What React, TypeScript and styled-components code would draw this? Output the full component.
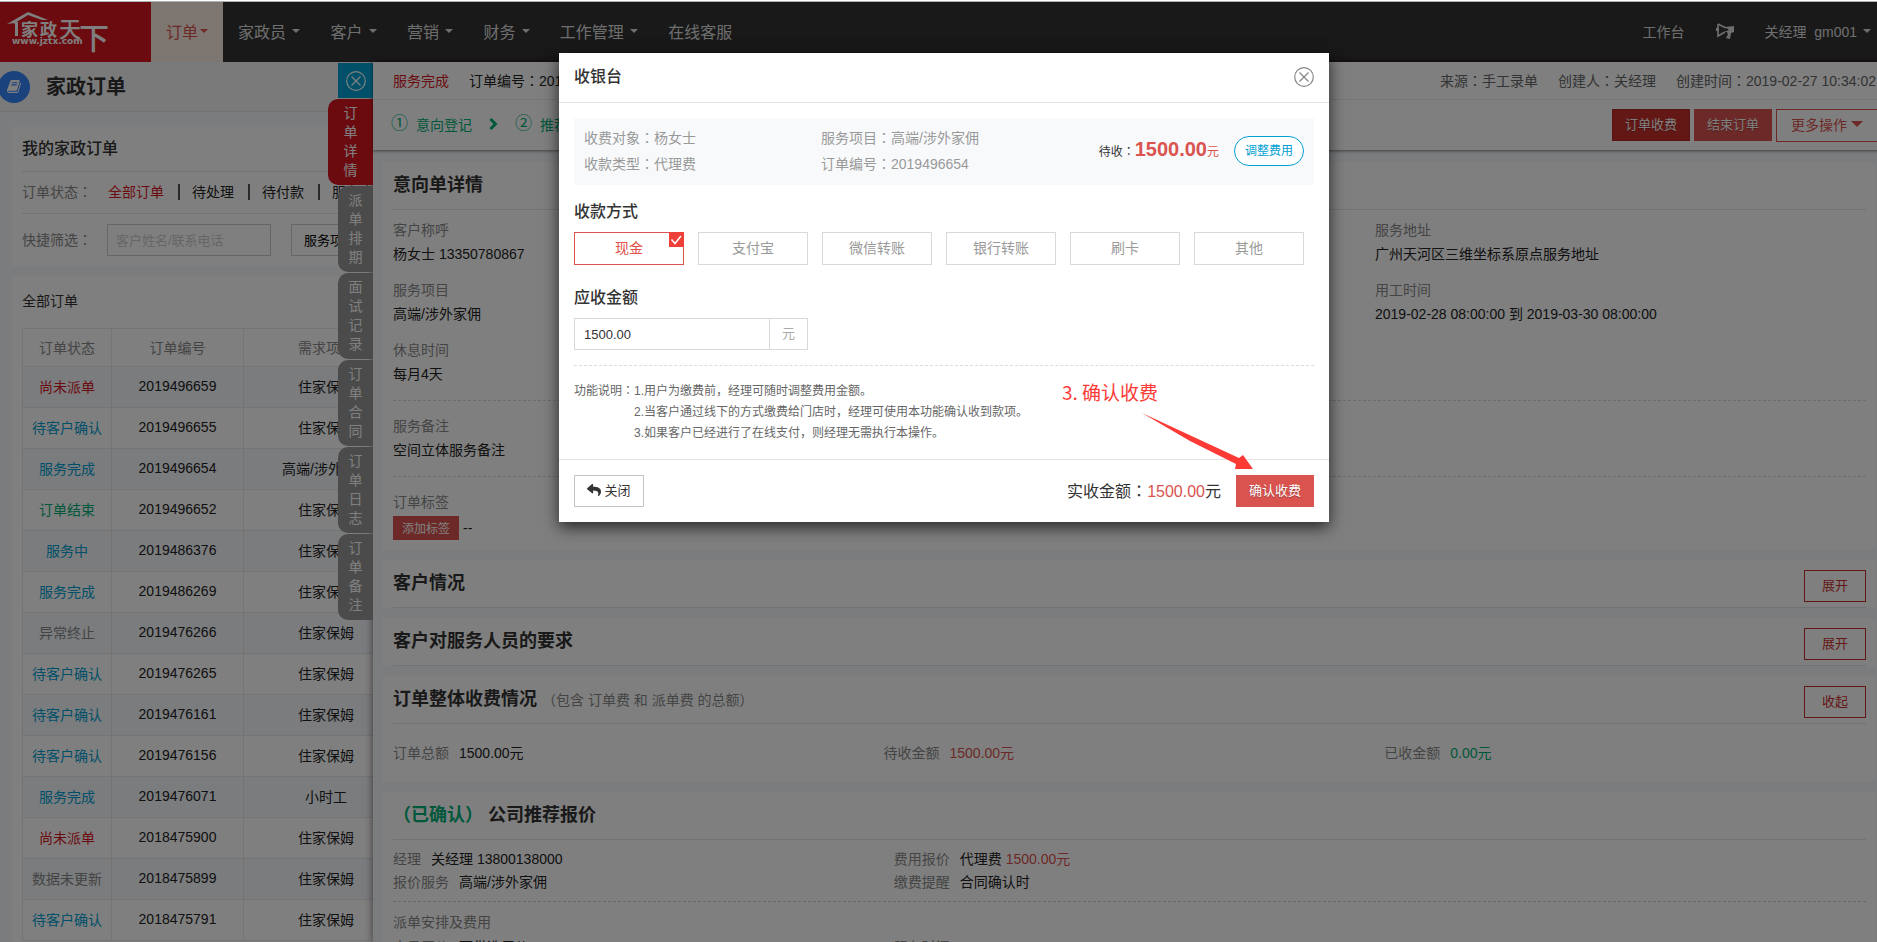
import React from "react";
import styled, { createGlobalStyle } from "styled-components";
import { FaReply } from "react-icons/fa";

const RED = "#d8161f";
const DANGER = "#d9534f";
const BLUE = "#00a0d2";
const GREEN = "#00b078";
const TINT = "#f5f8fd";
const LINE = "#e5e5e5";

const GlobalStyle = createGlobalStyle`
  *, *::before, *::after { box-sizing: border-box; }
  html, body, #root { height: 100%; }
  body {
    margin: 0;
    overflow: hidden;
    font-family: "Liberation Sans", Arial, "Noto Sans CJK SC", sans-serif;
    font-size: 14px;
    color: #333;
    background: #fff;
  }
  button, input, select { font-family: inherit; margin: 0; }
  button { cursor: pointer; white-space: nowrap; }
  a { color: inherit; text-decoration: none; }
  h1, h2, h3, p, ol, dl, dd { margin: 0; padding: 0; }
`;

/* Full-width colon set in the middle of its cell */
const ColonGlyph = styled.span`
  font-family: "Noto Sans CJK TC", sans-serif;
  line-height: 1;
`;
const Colon = () => <ColonGlyph lang="zh-Hant">：</ColonGlyph>;

const Frame = styled.div`
  display: flex;
  flex-direction: column;
  height: 100vh;
  overflow: hidden;
`;

const TopEdge = styled.div`
  flex: none;
  height: 2px;
  background: #fff;
  border-bottom: 1px solid #adb3b3;
`;

const Page = styled.div`
  position: relative;
  flex: 1;
  min-height: 0;
  width: calc(100% + 9px);
  display: flex;
  flex-direction: column;
  background: ${TINT};
`;

/* ---------- top navigation ---------- */

const NavBar = styled.header`
  flex: none;
  display: flex;
  height: 60px;
  background: #333;
  color: #ddd;
`;

const Brand = styled.a`
  flex: none;
  width: 151px;
  height: 60px;
  background: ${RED};
`;

const NavMenu = styled.nav`
  display: flex;
  flex: 1;
`;

const NavLink = styled.a<{ $active?: boolean; $small?: boolean }>`
  display: flex;
  align-items: center;
  padding: 0 15px 2px;
  white-space: pre;
  font-size: ${(p) => (p.$small ? 14 : 16)}px;
  color: ${(p) => (p.$active ? DANGER : "inherit")};
  background: ${(p) => (p.$active ? "#fdece1" : "transparent")};
`;

const Caret = styled.span<{ $size?: number }>`
  width: 0;
  height: 0;
  margin-left: 2px;
  border: solid transparent;
  border-width: ${(p) => p.$size ?? 4}px ${(p) => p.$size ?? 4}px 0;
  border-top-color: currentColor;
`;

/* ---------- order list page ---------- */

const ListPage = styled.main`
  flex: 1;
  min-height: 0;
  display: flex;
  flex-direction: column;
  overflow: hidden;
`;

const PageHeading = styled.div`
  flex: none;
  display: flex;
  align-items: center;
  gap: 16px;
  height: 50px;
  background: #f5f5f5;
  border-bottom: 1px solid ${LINE};
`;

const HeadingBadge = styled.span`
  display: flex;
  align-items: center;
  justify-content: center;
  width: 32px;
  height: 32px;
  margin-left: -2px;
  border-radius: 50%;
  background: #3484fa;
  color: #fff;
`;

const HeadingText = styled.h1`
  padding-bottom: 2px;
  font-size: 20px;
  font-weight: 700;
`;

const ListCards = styled.div`
  flex: 1;
  display: flex;
  flex-direction: column;
  gap: 10px;
  padding: 15px 0 0 12px;
`;

const ListCard = styled.section<{ $grow?: boolean }>`
  flex: ${(p) => (p.$grow ? 1 : "none")};
  padding: 0 10px;
  background: #fff;
`;

const ListTitle = styled.h2`
  font-size: 16px;
  font-weight: 500;
  line-height: 44px;
`;

const FilterRow = styled.div`
  display: flex;
  align-items: center;
  height: 42px;
  padding-bottom: 2px;
  border-top: 1px solid ${LINE};
  & + & {
    height: 53px;
    padding-bottom: 0;
  }
`;

const FilterLabel = styled.label`
  flex: none;
  width: 85px;
  padding-bottom: 2px;
  color: #888;
`;

const StatusList = styled.div`
  display: flex;
`;

const StatusLink = styled.a<{ $active?: boolean }>`
  color: ${(p) => (p.$active ? RED : "#222")};
  line-height: 16px;
  padding: 0 14px;
  &:first-child {
    padding-left: 1px;
  }
  & + & {
    padding-left: 12px;
    border-left: 2px solid #555;
  }
`;

const FilterInput = styled.input`
  width: 164px;
  height: 32px;
  padding: 0 8px;
  border: 1px solid #ccc;
  font-size: 13px;
  &::placeholder {
    color: #cdcdcd;
  }
`;

const FilterSelect = styled.select`
  appearance: none;
  width: 120px;
  height: 32px;
  margin-left: 20px;
  padding: 0 12px;
  border: 1px solid #ccc;
  border-radius: 0;
  background: #fff;
  color: #000;
  font-size: 13px;
`;

const TableCaption = styled.h3`
  padding-bottom: 2px;
  font-size: 14px;
  font-weight: 400;
  line-height: 50px;
`;

const OrderTable = styled.table`
  width: 387px;
  table-layout: fixed;
  border-collapse: collapse;
  text-align: center;
  th,
  td {
    padding: 0 0 2px;
    border: 1px solid #e8e8e8;
  }
  th {
    height: 38px;
    font-weight: 400;
    color: #888;
  }
  td {
    height: 41px;
    color: #222;
  }
  tbody tr:nth-child(odd) {
    background: ${TINT};
  }
`;

const StatusText = styled.span<{ $tone: string }>`
  color: ${(p) => p.$tone};
`;

/* ---------- order drawer ---------- */

const Drawer = styled.aside`
  position: absolute;
  top: 60px;
  right: 0;
  bottom: 0;
  left: 373px;
  display: flex;
  flex-direction: column;
  background: ${TINT};
  box-shadow: 0 0 8px rgba(40, 0, 20, 0.6);
`;

const DrawerTabs = styled.div`
  position: absolute;
  top: 1px;
  right: 100%;
  display: flex;
  flex-direction: column;
  align-items: flex-end;
  gap: 1px;
`;

const DrawerClose = styled.button`
  display: flex;
  align-items: center;
  justify-content: center;
  width: 35px;
  height: 35px;
  padding: 0;
  border: 0;
  background: ${BLUE};
  color: #fff;
`;

const DrawerTab = styled.button<{ $active?: boolean }>`
  display: flex;
  justify-content: center;
  width: ${(p) => (p.$active ? 45 : 35)}px;
  padding: 5px 0;
  border: 0;
  border-radius: 10px 0 0 10px;
  background: ${(p) => (p.$active ? RED : "#969696")};
  color: #fff;
  font-size: 14px;
  line-height: 19px;
  span {
    width: 14px;
    white-space: normal;
    word-break: break-all;
  }
`;

const DrawerHead = styled.div`
  position: relative;
  flex: none;
  background: #fff;
  box-shadow: 0 1px 3px rgba(0, 0, 0, 0.5);
`;

const MetaRow = styled.div`
  display: flex;
  align-items: center;
  gap: 20px;
  height: 38px;
  padding: 0 10px 2px 20px;
  border-bottom: 1px solid #efefef;
  color: #222;
`;

const MetaRight = styled.div`
  display: flex;
  gap: 20px;
  margin-left: auto;
  color: #666;
`;

const StepRow = styled.div`
  display: flex;
  align-items: center;
  height: 50px;
  padding-left: 18px;
`;

const Steps = styled.ol`
  display: flex;
  flex: 1;
  align-items: center;
  gap: 17px;
  padding-bottom: 2px;
  list-style: none;
  color: ${GREEN};
  li {
    display: flex;
    align-items: center;
    gap: 8px;
  }
`;

const StepNumber = styled.span`
  font-size: 17px;
  line-height: 24px;
`;

const Actions = styled.div`
  display: flex;
  align-items: center;
  gap: 4px;
`;

const SolidButton = styled.button<{ $strong?: boolean }>`
  height: 32px;
  padding: 0 12px 3px;
  border: 1px solid ${(p) => (p.$strong ? "#ac2925" : DANGER)};
  background: ${(p) => (p.$strong ? "#c9302c" : DANGER)};
  color: #fff;
  font-size: 13px;
  text-shadow: 0 1px 1px rgba(0, 0, 0, 0.3);
`;

const MoreButton = styled.button`
  display: flex;
  align-items: center;
  gap: 2px;
  height: 33px;
  width: 110px;
  padding: 0 14px 2px;
  border: 1px solid ${DANGER};
  background: #fff;
  color: ${DANGER};
  font-size: 14px;
`;

const DrawerBody = styled.div`
  flex: 1;
  min-height: 0;
  display: flex;
  flex-direction: column;
  gap: 10px;
  padding: 12px 10px 0;
  overflow: hidden;
`;

const Card = styled.section`
  flex: none;
  padding: 0 10px;
  background: #fff;
`;

const CardHead = styled.div`
  display: flex;
  justify-content: space-between;
  height: 48px;
  border-bottom: 1px solid ${LINE};
`;

const CardTitle = styled.h2`
  font-size: 18px;
  font-weight: 700;
  line-height: 47px;
  white-space: pre;
  em {
    font-style: normal;
    color: ${GREEN};
  }
  small {
    font-size: 14px;
    font-weight: 400;
    color: #888;
  }
`;

const OutlineButton = styled.button`
  width: 62px;
  height: 32px;
  margin-top: 10px;
  padding: 0 0 3px;
  border: 1px solid #c9302c;
  background: #fff;
  color: #c9302c;
  font-size: 13px;
`;

const FieldSection = styled.dl`
  display: grid;
  grid-template-columns: repeat(3, 1fr);
  gap: 12px 0;
  padding: 13px 0 14px;
  line-height: 24px;
  &:nth-of-type(1) {
    padding-top: 8px;
  }
  & + & {
    border-top: 1px dashed #d8d8d8;
  }
  &:last-child {
    padding-bottom: 10px;
  }
`;

const Field = styled.div<{ $column?: number }>`
  grid-column: ${(p) => p.$column ?? 1};
  dt {
    color: #8a8a8a;
  }
  dd {
    color: #222;
  }
`;

const TagRow = styled.dd`
  display: flex;
  gap: 4px;
  margin-top: 2px;
`;

const TagButton = styled.button`
  width: 66px;
  height: 24px;
  padding: 0 0 2px;
  border: 0;
  background: ${DANGER};
  color: #fff;
  font-size: 12px;
`;

const AmountRow = styled.dl`
  display: grid;
  grid-template-columns: 33.3% 34% 1fr;
  padding: 18px 0 17px;
  line-height: 23px;
`;

const QuoteGrid = styled.dl`
  display: grid;
  grid-template-columns: 34% 1fr;
  padding: 8px 0 7px;
  line-height: 23px;
`;

const ArrangeBlock = styled.div`
  padding-top: 9px;
  border-top: 1px dashed #d0d0d0;
  line-height: 23px;
  color: #888;
`;

const ArrangeGrid = styled.dl`
  display: grid;
  grid-template-columns: 34% 1fr;
  padding-top: 2px;
`;

const Pair = styled.div<{ $tone?: string }>`
  display: flex;
  gap: 10px;
  dt {
    color: #8a8a8a;
  }
  dd {
    color: ${(p) => p.$tone ?? "#222"};
  }
  b {
    font-weight: 400;
    color: ${DANGER};
  }
`;

/* ---------- cashier dialog ---------- */

const Backdrop = styled.div`
  position: absolute;
  inset: 0;
  display: flex;
  align-items: flex-start;
  justify-content: center;
  padding: 51px 0 0 2px;
  background: rgba(0, 0, 0, 0.5);
`;

const Dialog = styled.div`
  position: relative;
  width: 770px;
  background: #fff;
  box-shadow: 0 5px 15px rgba(0, 0, 0, 0.7);
`;

const DialogHead = styled.div`
  display: flex;
  align-items: center;
  justify-content: space-between;
  height: 50px;
  padding: 0 15px 2px;
  border-bottom: 1px solid #e2e2e2;
`;

const DialogTitle = styled.h2`
  font-size: 16px;
  font-weight: 500;
  line-height: 24px;
`;

const IconButton = styled.button`
  display: flex;
  padding: 0;
  border: 0;
  background: none;
  color: #888;
`;

const DialogBody = styled.div`
  padding: 15px;
`;

const Summary = styled.div`
  display: flex;
  align-items: center;
  height: 67px;
  padding: 0 10px 2px;
  background: #f8f9fb;
  color: #999;
  line-height: 26px;
`;

const SummaryColumn = styled.div`
  width: 237px;
`;

const Due = styled.div`
  margin-left: auto;
  margin-right: 15px;
  font-size: 12px;
  color: #333;
  strong {
    font-size: 20px;
    color: ${DANGER};
  }
  em {
    font-style: normal;
    color: ${DANGER};
  }
`;

const PillButton = styled.button`
  width: 70px;
  height: 30px;
  padding: 0 0 2px;
  border: 1px solid ${BLUE};
  border-radius: 15px;
  background: #fff;
  color: ${BLUE};
  font-size: 12px;
`;

const BlockTitle = styled.h3`
  margin: 15px 0 8px;
  font-size: 16px;
  font-weight: 500;
  line-height: 24px;
  label {
    display: block;
  }
`;

const Methods = styled.div`
  display: flex;
  gap: 14px;
  margin-bottom: 21px;
`;

const Method = styled.label<{ $checked?: boolean }>`
  position: relative;
  display: flex;
  align-items: center;
  justify-content: center;
  width: 110px;
  height: 33px;
  padding-bottom: 3px;
  border: 1px solid ${(p) => (p.$checked ? DANGER : "#d9d9d9")};
  color: ${(p) => (p.$checked ? "#e0504a" : "#999")};
  cursor: pointer;
  input {
    position: absolute;
    inset: 0;
    margin: 0;
    opacity: 0;
  }
  svg {
    position: absolute;
    top: -1px;
    right: -1px;
  }
`;

const AmountGroup = styled.div`
  display: flex;
  width: 234px;
  height: 32px;
  border: 1px solid #d9d9d9;
`;

const AmountInput = styled.input`
  flex: 1;
  min-width: 0;
  padding: 0 9px;
  border: 0;
  font-size: 13px;
  color: #333;
`;

const AmountUnit = styled.span`
  display: flex;
  align-items: center;
  justify-content: center;
  width: 38px;
  padding-bottom: 3px;
  border-left: 1px solid #d9d9d9;
  color: #aaa;
  font-size: 13px;
`;

const Notes = styled.div`
  display: flex;
  margin-top: 15px;
  padding-top: 15px;
  border-top: 1px dashed #dcdcdc;
  font-size: 12px;
  line-height: 21px;
  color: #666;
  p {
    white-space: nowrap;
  }
`;

const DialogFoot = styled.div`
  display: flex;
  align-items: center;
  gap: 15px;
  padding: 15px;
  border-top: 1px solid #e2e2e2;
`;

const BackButton = styled.button`
  display: flex;
  align-items: center;
  justify-content: center;
  gap: 3px;
  width: 70px;
  height: 32px;
  margin-right: auto;
  padding: 0 0 3px;
  border: 1px solid #c4c4c4;
  background: #fff;
  color: #333;
  font-size: 13px;
`;

const Received = styled.span`
  padding-bottom: 2px;
  font-size: 16px;
  b {
    font-weight: 400;
    color: ${DANGER};
  }
`;

const Callout = styled.div`
  position: absolute;
  left: 503px;
  top: 324px;
  font-family: "Noto Sans CJK SC", sans-serif;
  font-size: 19px;
  line-height: 30px;
  color: #fb3a36;
  pointer-events: none;
  svg {
    display: block;
    margin: 3px 0 0 78px;
  }
`;

/* ---------- drawings ---------- */

const Logo = () => (
  <svg width="112" height="60" viewBox="0 0 112 60" fill="#fff" role="img" aria-label="家政天下">
    <path d="M7 22 L28 10 L48 18 L42 18 L28 13 L15 21 Z" />
    <path d="M12 20 L18 20 L18 34 L15 34 L15 22 Z" />
    <g fontFamily="'Noto Sans CJK SC', sans-serif">
      <text x="21" y="34" fontSize="17" fontWeight="700">家</text>
      <text x="40" y="34" fontSize="17" fontWeight="700">政</text>
      <text x="59" y="35" fontSize="22" fontWeight="500">天</text>
      <text x="79" y="47" fontSize="30" fontWeight="500">下</text>
    </g>
    <text x="12" y="42" fontSize="9" fontWeight="700" fontFamily="'DejaVu Sans', sans-serif">www.jztx.com</text>
  </svg>
);

const BookIcon = () => (
  <svg width="14" height="15" viewBox="0 0 1664 1792" fill="currentColor" aria-hidden="true">
    <path d="M1639 478q40 57 18 129l-275 906q-19 64-76.5 107.5t-122.5 43.5h-923q-77 0-148.5-53.5t-99.5-131.5q-24-67-2-127 0-4 3-27t4-37q1-8-3-21.5t-3-19.5q2-11 8-21t16.5-23.5 16.5-23.5q23-38 45-91.5t30-91.5q3-10 .5-30t-.5-28q3-11 17-28t17-23q21-36 42-92t25-90q1-9-2.5-32t.5-28q4-13 22-30.5t22-22.5q19-26 42.5-84.5t27.5-96.5q1-8-3-25.5t-2-26.5q2-8 9-18t18-23 17-21q8-12 16.5-30.5t15-35 16-36 19.5-32 26.5-23.5 36-11.5 47.5 5.5l-1 3q38-9 51-9h761q74 0 114 56t18 130l-274 906q-36 119-71.5 153.5t-128.5 34.5h-869q-27 0-38 15-11 16-1 43 24 70 144 70h923q29 0 56-15.5t35-41.5l300-987q7-22 5-57 38 15 59 43zm-1064 2q-4 13 2 22.5t20 9.5h608q13 0 25.5-9.5t16.5-22.5l21-64q4-13-2-22.5t-20-9.5h-608q-13 0-25.5 9.5t-16.5 22.5zm-83 256q-4 13 2 22.5t20 9.5h608q13 0 25.5-9.5t16.5-22.5l21-64q4-13-2-22.5t-20-9.5h-608q-13 0-25.5 9.5t-16.5 22.5z" />
  </svg>
);

const HornIcon = () => (
  <svg width="20" height="18" viewBox="0 0 20 18" aria-label="公告">
    <path d="M3 2 L3 14 L10 10 M3 2 L11 6" fill="none" stroke="currentColor" strokeWidth="1.6" />
    <path d="M1 6 H4 V9 H1 Z M10 5 L19 4 L19 10 L16 11 L15 17 L11 16 L12 14 L13 13 L12 10 L9 10 L14 8 Z" fill="currentColor" />
  </svg>
);

const StepChevron = () => (
  <svg width="9" height="12" viewBox="0 0 9 12" aria-hidden="true">
    <path d="M1.5 1 L6.5 6 L1.5 11" fill="none" stroke="currentColor" strokeWidth="3" />
  </svg>
);

const CircleClose = () => (
  <svg width="20" height="20" viewBox="0 0 20 20" fill="none" stroke="currentColor" aria-hidden="true">
    <circle cx="10" cy="10" r="9.3" strokeWidth="1.2" />
    <path d="M5.5 5.5 L14.5 14.5 M14.5 5.5 L5.5 14.5" strokeWidth="1.3" />
  </svg>
);

const CheckCorner = () => (
  <svg width="15" height="15" viewBox="0 0 15 15" aria-hidden="true">
    <rect width="15" height="15" fill="#ee3f38" />
    <path d="M2.5 7.5 L6 11.5 L12 4" fill="none" stroke="#fff" strokeWidth="1.5" />
  </svg>
);

const ArrowDrawing = () => (
  <svg width="116" height="62" viewBox="0 0 116 62" fill="#fb3a36" aria-hidden="true">
    <path d="M2 3 L99 48 L103 45 L113 59 L95 59 L96 54 L50 31 Z" />
  </svg>
);

/* ---------- data ---------- */

const navItems = ["家政员", "客户", "营销", "财务", "工作管理"];

const tabs = ["订单详情", "派单排期", "面试记录", "订单合同", "订单日志", "订单备注"];

const orders: [string, string, string, string][] = [
  ["尚未派单", RED, "2019496659", "住家保姆"],
  ["待客户确认", BLUE, "2019496655", "住家保姆"],
  ["服务完成", BLUE, "2019496654", "高端/涉外家佣"],
  ["订单结束", GREEN, "2019496652", "住家保姆"],
  ["服务中", BLUE, "2019486376", "住家保姆"],
  ["服务完成", BLUE, "2019486269", "住家保姆"],
  ["异常终止", "#888", "2019476266", "住家保姆"],
  ["待客户确认", BLUE, "2019476265", "住家保姆"],
  ["待客户确认", BLUE, "2019476161", "住家保姆"],
  ["待客户确认", BLUE, "2019476156", "住家保姆"],
  ["服务完成", BLUE, "2019476071", "小时工"],
  ["尚未派单", RED, "2018475900", "住家保姆"],
  ["数据未更新", "#888", "2018475899", "住家保姆"],
  ["待客户确认", BLUE, "2018475791", "住家保姆"],
];

const methods = ["现金", "支付宝", "微信转账", "银行转账", "刷卡", "其他"];

/* ---------- sections ---------- */

function TopNav() {
  return (
    <NavBar>
      <Brand href="#"><Logo /></Brand>
      <NavMenu>
        <NavLink href="#" $active>订单<Caret /></NavLink>
        {navItems.map((item) => (
          <NavLink href="#" key={item}>{item + " "}<Caret /></NavLink>
        ))}
        <NavLink href="#">在线客服</NavLink>
      </NavMenu>
      <NavLink href="#" $small>工作台</NavLink>
      <NavLink href="#" $small><HornIcon /></NavLink>
      <NavLink href="#" $small>{"关经理  gm001 "}<Caret /></NavLink>
    </NavBar>
  );
}

function OrderList() {
  return (
    <ListPage>
      <PageHeading>
        <HeadingBadge><BookIcon /></HeadingBadge>
        <HeadingText>家政订单</HeadingText>
      </PageHeading>
      <ListCards>
        <ListCard>
          <ListTitle>我的家政订单</ListTitle>
          <FilterRow>
            <FilterLabel as="span">订单状态<Colon /></FilterLabel>
            <StatusList>
              <StatusLink href="#" $active>全部订单</StatusLink>
              <StatusLink href="#">待处理</StatusLink>
              <StatusLink href="#">待付款</StatusLink>
              <StatusLink href="#">服务中</StatusLink>
            </StatusList>
          </FilterRow>
          <FilterRow>
            <FilterLabel htmlFor="keyword">快捷筛选<Colon /></FilterLabel>
            <FilterInput id="keyword" placeholder="客户姓名/联系电话" />
            <FilterSelect aria-label="服务项目">
              <option>服务项目</option>
            </FilterSelect>
          </FilterRow>
        </ListCard>
        <ListCard $grow>
          <TableCaption>全部订单</TableCaption>
          <OrderTable>
            <colgroup>
              <col width="89" />
              <col width="132" />
              <col width="165" />
            </colgroup>
            <thead>
              <tr><th>订单状态</th><th>订单编号</th><th>需求项目</th></tr>
            </thead>
            <tbody>
              {orders.map(([status, tone, code, service]) => (
                <tr key={code}>
                  <td><StatusText $tone={tone}>{status}</StatusText></td>
                  <td>{code}</td>
                  <td>{service}</td>
                </tr>
              ))}
            </tbody>
          </OrderTable>
        </ListCard>
      </ListCards>
    </ListPage>
  );
}

function OrderDrawer() {
  return (
    <Drawer>
      <DrawerTabs>
        <DrawerClose aria-label="关闭详情"><CircleClose /></DrawerClose>
        {tabs.map((tab, i) => (
          <DrawerTab key={tab} $active={i === 0}><span>{tab}</span></DrawerTab>
        ))}
      </DrawerTabs>
      <DrawerHead>
        <MetaRow>
          <StatusText $tone={RED}>服务完成</StatusText>
          <span>订单编号<Colon />2019496654</span>
          <MetaRight>
            <span>来源<Colon />手工录单</span>
            <span>创建人<Colon />关经理</span>
            <span>创建时间<Colon />2019-02-27 10:34:02</span>
          </MetaRight>
        </MetaRow>
        <StepRow>
          <Steps>
            <li><StepNumber>①</StepNumber>意向登记</li>
            <StepChevron />
            <li><StepNumber>②</StepNumber>推荐报价</li>
          </Steps>
          <Actions>
            <SolidButton $strong>订单收费</SolidButton>
            <SolidButton>结束订单</SolidButton>
            <MoreButton>更多操作 <Caret $size={6} /></MoreButton>
          </Actions>
        </StepRow>
      </DrawerHead>
      <DrawerBody>
        <Card>
          <CardHead><CardTitle>意向单详情</CardTitle></CardHead>
          <FieldSection>
            <Field><dt>客户称呼</dt><dd>杨女士 13350780867</dd></Field>
            <Field $column={3}><dt>服务地址</dt><dd>广州天河区三维坐标系原点服务地址</dd></Field>
            <Field><dt>服务项目</dt><dd>高端/涉外家佣</dd></Field>
            <Field $column={3}><dt>用工时间</dt><dd>2019-02-28 08:00:00 到 2019-03-30 08:00:00</dd></Field>
            <Field><dt>休息时间</dt><dd>每月4天</dd></Field>
          </FieldSection>
          <FieldSection>
            <Field><dt>服务备注</dt><dd>空间立体服务备注</dd></Field>
          </FieldSection>
          <FieldSection>
            <Field>
              <dt>订单标签</dt>
              <TagRow><TagButton>添加标签</TagButton>--</TagRow>
            </Field>
          </FieldSection>
        </Card>
        <Card>
          <CardHead><CardTitle>客户情况</CardTitle><OutlineButton>展开</OutlineButton></CardHead>
        </Card>
        <Card>
          <CardHead><CardTitle>客户对服务人员的要求</CardTitle><OutlineButton>展开</OutlineButton></CardHead>
        </Card>
        <Card>
          <CardHead>
            <CardTitle>订单整体收费情况 <small>（包含 订单费 和 派单费 的总额）</small></CardTitle>
            <OutlineButton>收起</OutlineButton>
          </CardHead>
          <AmountRow>
            <Pair><dt>订单总额</dt><dd>1500.00元</dd></Pair>
            <Pair $tone={DANGER}><dt>待收金额</dt><dd>1500.00元</dd></Pair>
            <Pair $tone={GREEN}><dt>已收金额</dt><dd>0.00元</dd></Pair>
          </AmountRow>
        </Card>
        <Card>
          <CardHead><CardTitle><em>（已确认）</em> 公司推荐报价</CardTitle></CardHead>
          <QuoteGrid>
            <Pair><dt>经理</dt><dd>关经理 13800138000</dd></Pair>
            <Pair><dt>费用报价</dt><dd>代理费 <b>1500.00元</b></dd></Pair>
            <Pair><dt>报价服务</dt><dd>高端/涉外家佣</dd></Pair>
            <Pair><dt>缴费提醒</dt><dd>合同确认时</dd></Pair>
          </QuoteGrid>
          <ArrangeBlock>
            派单安排及费用
            <ArrangeGrid>
              <Pair><dt>人员原价</dt><dd>可供选用价</dd></Pair>
              <Pair><dt>服务时间</dt></Pair>
            </ArrangeGrid>
          </ArrangeBlock>
        </Card>
      </DrawerBody>
    </Drawer>
  );
}

function CashierDialog() {
  return (
    <Backdrop>
      <Dialog role="dialog" aria-labelledby="cashier-title">
        <DialogHead>
          <DialogTitle id="cashier-title">收银台</DialogTitle>
          <IconButton aria-label="关闭"><CircleClose /></IconButton>
        </DialogHead>
        <DialogBody>
          <Summary>
            <SummaryColumn><p>收费对象<Colon />杨女士</p><p>收款类型<Colon />代理费</p></SummaryColumn>
            <SummaryColumn><p>服务项目<Colon />高端/涉外家佣</p><p>订单编号<Colon />2019496654</p></SummaryColumn>
            <Due>待收<Colon /><strong>1500.00</strong><em>元</em></Due>
            <PillButton>调整费用</PillButton>
          </Summary>
          <BlockTitle>收款方式</BlockTitle>
          <Methods role="radiogroup" aria-label="收款方式">
            {methods.map((method, i) => (
              <Method key={method} $checked={i === 0}>
                <input type="radio" name="method" defaultChecked={i === 0} />
                {method}
                {i === 0 && <CheckCorner />}
              </Method>
            ))}
          </Methods>
          <BlockTitle><label htmlFor="amount">应收金额</label></BlockTitle>
          <AmountGroup>
            <AmountInput id="amount" defaultValue="1500.00" />
            <AmountUnit>元</AmountUnit>
          </AmountGroup>
          <Notes>
            <span>功能说明<Colon /></span>
            <div>
              <p>1.用户为缴费前，经理可随时调整费用金额。</p>
              <p>2.当客户通过线下的方式缴费给门店时，经理可使用本功能确认收到款项。</p>
              <p>3.如果客户已经进行了在线支付，则经理无需执行本操作。</p>
            </div>
          </Notes>
        </DialogBody>
        <DialogFoot>
          <BackButton><FaReply size={14} />关闭</BackButton>
          <Received>实收金额<Colon /><b>1500.00</b>元</Received>
          <SolidButton>确认收费</SolidButton>
        </DialogFoot>
        <Callout>
          3. 确认收费
          <ArrowDrawing />
        </Callout>
      </Dialog>
    </Backdrop>
  );
}

export default function App() {
  return (
    <>
      <GlobalStyle />
      <Frame>
        <TopEdge />
        <Page>
          <TopNav />
          <OrderList />
          <OrderDrawer />
          <CashierDialog />
        </Page>
      </Frame>
    </>
  );
}
